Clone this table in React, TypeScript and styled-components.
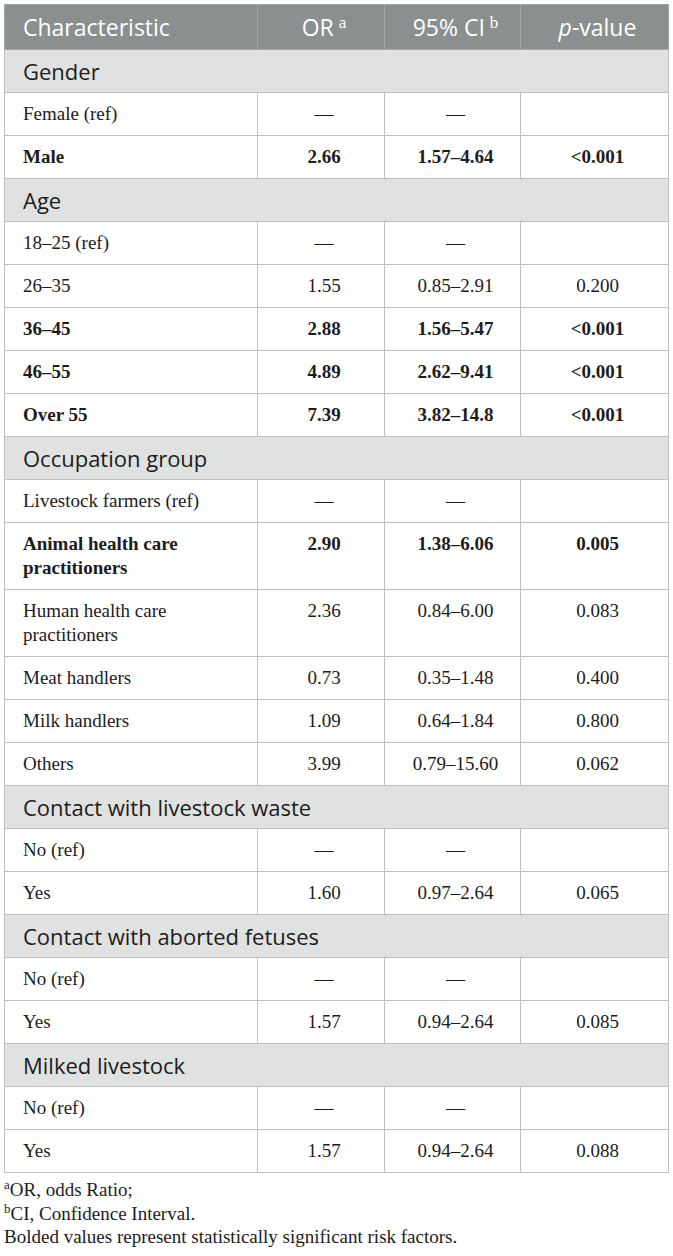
import React from "react";
import styled, { createGlobalStyle } from "styled-components";

const Global = createGlobalStyle`
  html, body { margin: 0; padding: 0; background: #ffffff; }
  body { font-family: "Liberation Serif", serif; color: #1c1c1c; }
`;

const Page = styled.div`
  padding: 4px 5px 12px 4px;
  width: 664px;
`;

const Table = styled.table`
  width: 664px;
  border-collapse: collapse;
  table-layout: fixed;
  border: 1px solid #b9bcbc;
`;

const HeadCell = styled.th<{ $align?: "left" | "center" }>`
  background: #8a8f8f;
  color: #ffffff;
  font-family: "Open Sans", "Noto Sans", sans-serif;
  font-weight: 400;
  font-size: 23px;
  line-height: 26px;
  padding: 9px 12px 9px 18px;
  text-align: ${(p) => p.$align ?? "center"};
  border: 1px solid #a3a7a7;
  white-space: nowrap;
`;

const Sup = styled.sup`
  font-family: "Liberation Serif", serif;
  font-size: 17px;
  line-height: 0;
  vertical-align: 8px;
  margin-left: 5px;
`;

const SectionCell = styled.td`
  background: #e0e2e1;
  color: #1c1c1c;
  font-family: "Open Sans", "Noto Sans", sans-serif;
  font-size: 22px;
  line-height: 24px;
  padding: 9px 18px;
  border: 1px solid #bfc1c1;
`;

const Cell = styled.td<{ $align?: "left" | "center"; $bold?: boolean }>`
  font-family: "Liberation Serif", serif;
  font-size: 19px;
  line-height: 24px;
  padding: 9px 12px 9px 18px;
  text-align: ${(p) => p.$align ?? "center"};
  font-weight: ${(p) => (p.$bold ? 700 : 400)};
  vertical-align: top;
  border: 1px solid #bfc1c1;
  color: #1c1c1c;
`;

const Notes = styled.div`
  margin-top: 5px;
  font-family: "Liberation Serif", serif;
  font-size: 19px;
  line-height: 23.5px;
  color: #1c1c1c;
`;

const NoteSup = styled.sup`
  font-size: 13px;
  line-height: 0;
  vertical-align: 7px;
`;

type Row = { label: string; or: string; ci: string; p: string; bold?: boolean };
type Section = { title: string; rows: Row[] };

const dash = "\u2014";

const sections: Section[] = [
  {
    title: "Gender",
    rows: [
      { label: "Female (ref)", or: dash, ci: dash, p: "" },
      { label: "Male", or: "2.66", ci: "1.57\u20134.64", p: "<0.001", bold: true },
    ],
  },
  {
    title: "Age",
    rows: [
      { label: "18\u201325 (ref)", or: dash, ci: dash, p: "" },
      { label: "26\u201335", or: "1.55", ci: "0.85\u20132.91", p: "0.200" },
      { label: "36\u201345", or: "2.88", ci: "1.56\u20135.47", p: "<0.001", bold: true },
      { label: "46\u201355", or: "4.89", ci: "2.62\u20139.41", p: "<0.001", bold: true },
      { label: "Over 55", or: "7.39", ci: "3.82\u201314.8", p: "<0.001", bold: true },
    ],
  },
  {
    title: "Occupation group",
    rows: [
      { label: "Livestock farmers (ref)", or: dash, ci: dash, p: "" },
      { label: "Animal health care practitioners", or: "2.90", ci: "1.38\u20136.06", p: "0.005", bold: true },
      { label: "Human health care practitioners", or: "2.36", ci: "0.84\u20136.00", p: "0.083" },
      { label: "Meat handlers", or: "0.73", ci: "0.35\u20131.48", p: "0.400" },
      { label: "Milk handlers", or: "1.09", ci: "0.64\u20131.84", p: "0.800" },
      { label: "Others", or: "3.99", ci: "0.79\u201315.60", p: "0.062" },
    ],
  },
  {
    title: "Contact with livestock waste",
    rows: [
      { label: "No (ref)", or: dash, ci: dash, p: "" },
      { label: "Yes", or: "1.60", ci: "0.97\u20132.64", p: "0.065" },
    ],
  },
  {
    title: "Contact with aborted fetuses",
    rows: [
      { label: "No (ref)", or: dash, ci: dash, p: "" },
      { label: "Yes", or: "1.57", ci: "0.94\u20132.64", p: "0.085" },
    ],
  },
  {
    title: "Milked livestock",
    rows: [
      { label: "No (ref)", or: dash, ci: dash, p: "" },
      { label: "Yes", or: "1.57", ci: "0.94\u20132.64", p: "0.088" },
    ],
  },
];

export default function App() {
  return (
    <Page>
      <Global />
      <Table>
        <colgroup>
          <col style={{ width: 253 }} />
          <col style={{ width: 127 }} />
          <col style={{ width: 136 }} />
          <col style={{ width: 148 }} />
        </colgroup>
        <thead>
          <tr>
            <HeadCell $align="left">Characteristic</HeadCell>
            <HeadCell>
              OR<Sup>a</Sup>
            </HeadCell>
            <HeadCell>
              95% CI<Sup>b</Sup>
            </HeadCell>
            <HeadCell>
              <i>p</i>-value
            </HeadCell>
          </tr>
        </thead>
        <tbody>
          {sections.map((s) => (
            <React.Fragment key={s.title}>
              <tr>
                <SectionCell colSpan={4}>{s.title}</SectionCell>
              </tr>
              {s.rows.map((r, i) => (
                <tr key={s.title + i}>
                  <Cell $align="left" $bold={r.bold}>{r.label}</Cell>
                  <Cell $bold={r.bold}>{r.or}</Cell>
                  <Cell $bold={r.bold}>{r.ci}</Cell>
                  <Cell $bold={r.bold}>{r.p}</Cell>
                </tr>
              ))}
            </React.Fragment>
          ))}
        </tbody>
      </Table>
      <Notes>
        <div>
          <NoteSup>a</NoteSup>OR, odds Ratio;
        </div>
        <div>
          <NoteSup>b</NoteSup>CI, Confidence Interval.
        </div>
        <div>Bolded values represent statistically significant risk factors.</div>
      </Notes>
    </Page>
  );
}
